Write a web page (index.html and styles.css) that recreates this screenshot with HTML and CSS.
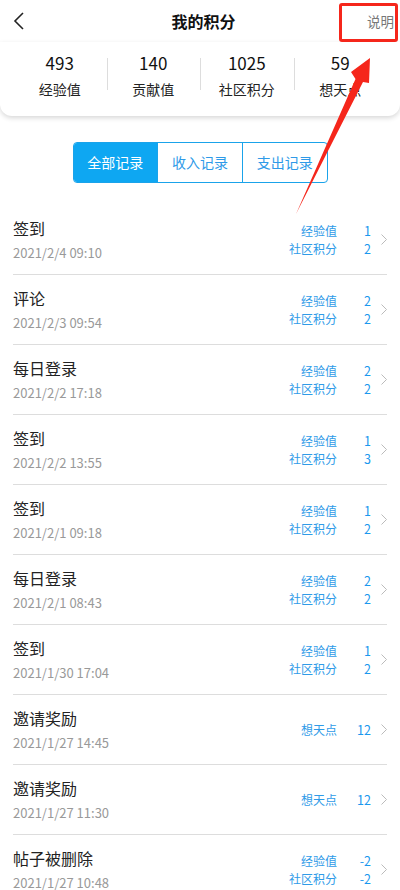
FILE: index.html
```html
<!DOCTYPE html>
<html lang="zh-CN">
<head>
    <meta charset="UTF-8">
    <meta name="viewport" content="width=device-width, initial-scale=1.0">
    <title>我的积分</title>
    <link rel="stylesheet" href="styles.css">
</head>
<body>

    <div class="page">
        <div class="header">
            <span class="back">
                <svg width="12" height="18" viewBox="0 0 12 18"><path d="M10 1 L2 9 L10 17" fill="none" stroke="#222" stroke-width="1.6"/></svg>
            </span>
            <h1 class="title">我的积分</h1>
            <span class="explain">说明</span>
        </div>

        <div class="card">
            <div class="stat"><div class="num">493</div><div class="label">经验值</div></div>
            <div class="stat"><div class="num">140</div><div class="label">贡献值</div></div>
            <div class="stat"><div class="num">1025</div><div class="label">社区积分</div></div>
            <div class="stat"><div class="num">59</div><div class="label">想天点</div></div>
        </div>

        <div class="tabs">
            <div class="tab active">全部记录</div>
            <div class="tab">收入记录</div>
            <div class="tab">支出记录</div>
        </div>

        <ul class="records" id="records"></ul>

        <!-- annotation drawn over the screenshot -->
        <div class="mark-box"></div>
        <svg class="mark-arrow" width="400" height="240" viewBox="0 0 400 240">
            <polygon points="296,214 355.5,79 351,72 370,58 369,83 363,82" fill="#f5261b"/>
        </svg>
    </div>

    <script>
        const records = [
            { name: "签到", time: "2021/2/4 09:10", items: [["经验值", "1"], ["社区积分", "2"]] },
            { name: "评论", time: "2021/2/3 09:54", items: [["经验值", "2"], ["社区积分", "2"]] },
            { name: "每日登录", time: "2021/2/2 17:18", items: [["经验值", "2"], ["社区积分", "2"]] },
            { name: "签到", time: "2021/2/2 13:55", items: [["经验值", "1"], ["社区积分", "3"]] },
            { name: "签到", time: "2021/2/1 09:18", items: [["经验值", "1"], ["社区积分", "2"]] },
            { name: "每日登录", time: "2021/2/1 08:43", items: [["经验值", "2"], ["社区积分", "2"]] },
            { name: "签到", time: "2021/1/30 17:04", items: [["经验值", "1"], ["社区积分", "2"]] },
            { name: "邀请奖励", time: "2021/1/27 14:45", items: [["想天点", "12"]] },
            { name: "邀请奖励", time: "2021/1/27 11:30", items: [["想天点", "12"]] },
            { name: "帖子被删除", time: "2021/1/27 10:48", items: [["经验值", "-2"], ["社区积分", "-2"]] }
        ];

        const list = document.getElementById("records");
        records.forEach(function(r) {
            let rows = "";
            r.items.forEach(function(it) {
                rows += '<div class="pt-row"><span class="pt-name">' + it[0] + '</span><span class="pt-val">' + it[1] + '</span></div>';
            });
            const li = document.createElement("li");
            li.className = "record";
            li.innerHTML =
                '<div class="info"><div class="name">' + r.name + '</div><div class="time">' + r.time + '</div></div>' +
                '<div class="points">' + rows + '</div>' +
                '<svg class="arrow" width="6" height="11" viewBox="0 0 6 11"><path d="M0.5 0.5 L5.5 5.5 L0.5 10.5" fill="none" stroke="#bbb" stroke-width="1"/></svg>';
            list.appendChild(li);
        });
    </script>

</body>
</html>
```

FILE: styles.css
```css
body {
    margin: 0;
    font-family: "Noto Sans CJK SC", "Noto Sans", sans-serif;
    background-color: #fff;
    color: #222;
}

.page {
    position: relative;
    width: 400px;
    overflow: hidden;
}

.header {
    height: 42px;
    display: flex;
    align-items: center;
    justify-content: space-between;
    padding: 0 6px 0 13px;
}

.back {
    width: 40px;
    display: flex;
    align-items: center;
}

.title {
    margin: 0;
    font-size: 16px;
    font-weight: bold;
    color: #111;
}

.explain {
    width: 40px;
    text-align: right;
    font-size: 13.5px;
    color: #777;
}

.card {
    display: flex;
    padding: 9px 13px 17px;
    border-radius: 0 0 12px 12px;
    box-shadow: 0 2px 5px rgba(0,0,0,0.16);
}

.stat {
    flex: 1;
    text-align: center;
    position: relative;
}

.stat + .stat::before {
    content: "";
    position: absolute;
    left: 0;
    top: 7px;
    height: 32px;
    border-left: 1px solid #ddd;
}

.num {
    font-size: 17px;
    line-height: 24px;
    color: #111;
}

.label {
    margin-top: 4px;
    font-size: 14px;
    line-height: 20px;
    color: #222;
}

.tabs {
    display: flex;
    width: 255px;
    margin: 26px auto 0;
    border: 1px solid #1aa3ea;
    border-radius: 4px;
    overflow: hidden;
    box-sizing: border-box;
}

.tab {
    flex: 1;
    height: 39px;
    line-height: 39px;
    text-align: center;
    font-size: 14px;
    color: #2e9ae8;
}

.tab + .tab {
    border-left: 1px solid #1aa3ea;
}

.tab.active {
    background-color: #0ea7f2;
    color: #fff;
}

.records {
    list-style: none;
    margin: 22px 13px 0;
    padding: 0;
}

.record {
    height: 70px;
    display: flex;
    align-items: center;
    border-bottom: 1px solid #ddd;
    box-sizing: border-box;
}

.info {
    flex: 1;
    padding-bottom: 1px;
}

.name {
    font-size: 16px;
    line-height: 22px;
    color: #222;
}

.time {
    margin-top: 4px;
    font-size: 13px;
    line-height: 19px;
    color: #999;
}

.points {
    font-size: 12px;
    line-height: 18px;
    color: #2f9be8;
}

.pt-row {
    display: flex;
    justify-content: flex-end;
}

.pt-val {
    width: 34px;
    text-align: right;
    font-size: 12.5px;
    color: #1a98ee;
}

.arrow {
    margin-left: 10px;
}

.mark-box {
    position: absolute;
    left: 339px;
    top: 3px;
    width: 59px;
    height: 39px;
    border: 3px solid #f5261b;
    border-radius: 3px;
    box-sizing: border-box;
}

.mark-arrow {
    position: absolute;
    left: 0;
    top: 0;
    pointer-events: none;
}
```
